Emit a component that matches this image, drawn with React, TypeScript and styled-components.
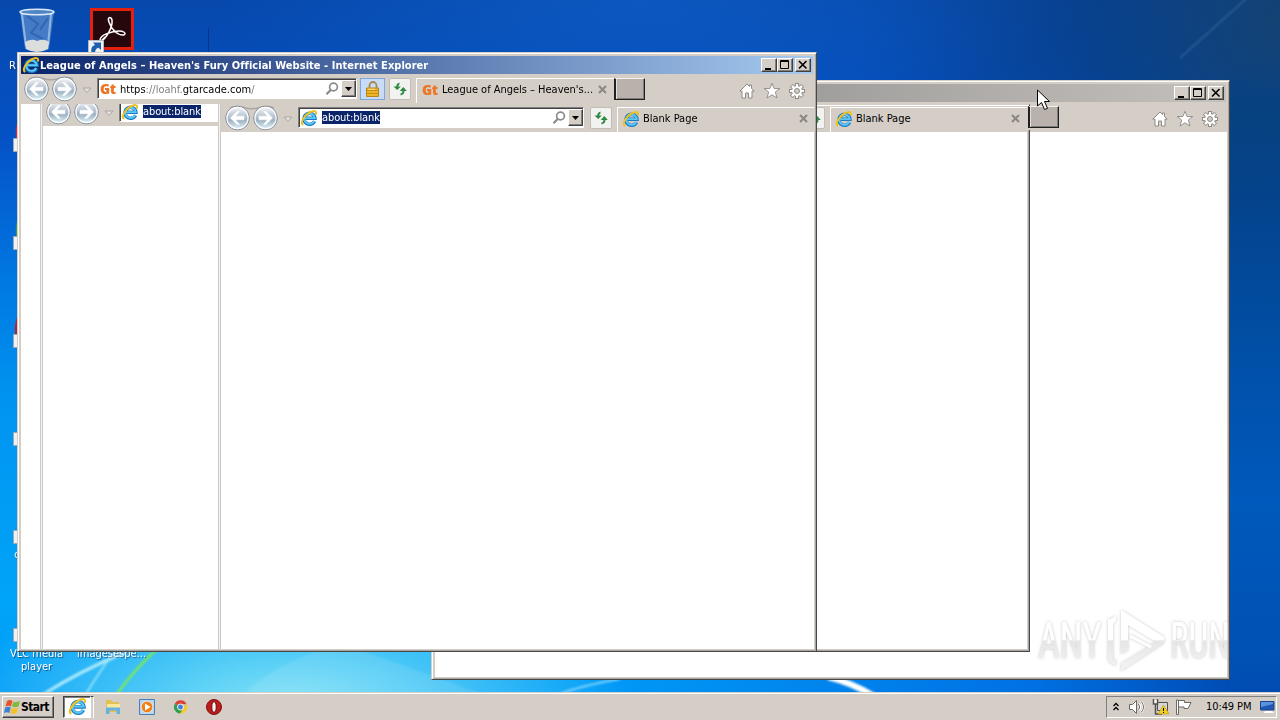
import React from "react";
import styled, { createGlobalStyle, css } from "styled-components";

const GlobalStyle = createGlobalStyle`
  * {
    box-sizing: border-box;
  }
  body {
    margin: 0;
    overflow: hidden;
    font-family: "DejaVu Sans Condensed", "DejaVu Sans", Verdana, sans-serif;
    font-stretch: condensed;
    font-size: 11px;
    color: #000;
  }
  svg {
    display: block;
    flex-shrink: 0;
    overflow: visible;
  }
`;

const face = "#d5cec7";

const Screen = styled.div`
  position: relative;
  width: 1280px;
  height: 720px;
  overflow: hidden;
  display: flex;
  flex-direction: column;
  justify-content: flex-end;
  background:
    radial-gradient(ellipse 340px 150px at 290px 715px, #8ee8f4 0%, rgba(110, 220, 246, 0.75) 40%, rgba(60, 190, 250, 0) 100%),
    radial-gradient(ellipse 420px 130px at 640px 0, rgba(16, 104, 212, 0.5), rgba(16, 104, 212, 0)),
    linear-gradient(90deg, rgba(0, 100, 230, 0) 45%, rgba(0, 96, 220, 0.7) 80%, rgba(0, 70, 175, 0.95) 97%) 0 300px / 1280px 420px no-repeat,
    radial-gradient(ellipse 420px 420px at 1280px 20px, rgba(20, 66, 112, 0.95), rgba(8, 62, 130, 0.75) 45%, rgba(0, 64, 150, 0)),
    linear-gradient(180deg, #0748ac 0, #0452c6 140px, #0078e2 280px, #0094f0 400px, #00a4f8 600px, #0098f8 720px);
`;

const RightShade = styled.div`
  position: absolute;
  right: 0;
  top: 60px;
  width: 50px;
  height: 633px;
  background: linear-gradient(
    180deg,
    rgba(10, 68, 126, 0) 0,
    #07417f 50px,
    #04438c 140px,
    #0050a8 300px,
    #0059bc 440px,
    #0052b4 590px,
    rgba(0, 80, 180, 0.2) 633px
  );
`;

const Rays = styled.svg`
  position: absolute;
  left: 0;
  top: 0;
`;

const DesktopItem = styled.div<{ x: number; y: number }>`
  position: absolute;
  left: ${({ x }) => x}px;
  top: ${({ y }) => y}px;
`;

const Label = styled.div`
  color: #fff;
  line-height: 13px;
  text-align: center;
  white-space: pre;
  text-shadow: 1px 1px 1px rgba(0, 30, 80, 0.6);
`;

const Window = styled.div<{ x: number; y: number; w: number; h: number }>`
  position: absolute;
  left: ${({ x }) => x}px;
  top: ${({ y }) => y}px;
  width: ${({ w }) => w}px;
  height: ${({ h }) => h}px;
  display: flex;
  flex-direction: column;
  padding: 2px;
  background: ${face};
  border: 1px solid ${face};
  border-right-color: #484848;
  border-bottom-color: #484848;
  box-shadow: inset 1px 1px 0 #fff, inset -1px -1px 0 #a8a4a0;
`;

const TitleBar = styled.div<{ active?: boolean }>`
  height: 18px;
  margin: 1px 1px 0;
  flex-shrink: 0;
  display: flex;
  align-items: center;
  padding: 0 2px 0 2px;
  color: #fff;
  font-weight: bold;
  background: ${({ active }) =>
    active
      ? "linear-gradient(90deg, #0a246a, #a6caf0)"
      : "linear-gradient(90deg, #808080, #c4c0bc)"};
`;

const Title = styled.span`
  flex: 1;
  white-space: nowrap;
  letter-spacing: 0.04px;
  padding-left: 1px;
`;

const CaptionButton = styled.span<{ gap?: boolean }>`
  width: 16px;
  height: 14px;
  margin-left: ${({ gap }) => (gap ? 2 : 0)}px;
  background: ${face};
  border: 1px solid;
  border-color: #fff #404040 #404040 #fff;
  box-shadow: inset -1px -1px 0 #848078;
`;

const Toolbar = styled.div<{ h: number; shift?: number; indent?: number }>`
  height: ${({ h }) => h}px;
  flex-shrink: 0;
  display: flex;
  align-items: flex-start;
  overflow: hidden;
  padding-left: ${({ indent = 0 }) => indent}px;
  background: ${face};
  > * {
    margin-top: ${({ shift = 0 }) => shift}px;
  }
`;

const NavSvg = styled.svg`
  position: relative;
  top: -3px;
`;

const AddressBar = styled.div<{ w: number }>`
  width: ${({ w }) => w}px;
  height: 21px;
  flex-shrink: 0;
  display: flex;
  align-items: center;
  padding: 0 0 0 2px;
  background: #fff;
  border: 1px solid;
  border-color: #808080 #fff #fff #808080;
  box-shadow: inset 1px 1px 0 #404040;
`;

const Url = styled.span<{ blank?: boolean }>`
  flex: 1;
  margin-left: ${({ blank }) => (blank ? 5 : 3)}px;
  padding-top: ${({ blank }) => (blank ? 0 : 1)}px;
  white-space: nowrap;
  letter-spacing: 0.02px;
  color: #808080;
  b {
    color: #000;
    font-weight: normal;
  }
`;

const Selected = styled.span`
  display: inline-block;
  height: 13px;
  line-height: 13px;
  color: #fff;
  background: #0a246a;
  letter-spacing: -0.1px;
`;

const DropButton = styled.span`
  width: 15px;
  height: 17px;
  margin-left: 2px;
  display: flex;
  align-items: center;
  justify-content: center;
  background: ${face};
  border: 1px solid;
  border-color: #fff #404040 #404040 #fff;
  box-shadow: inset -1px -1px 0 #808080;
`;

const SquareButton = styled.span<{ kind: "lock" | "refresh"; gap: number }>`
  width: ${({ kind }) => (kind === "lock" ? 25 : 22)}px;
  height: 22px;
  flex-shrink: 0;
  display: flex;
  align-items: center;
  justify-content: center;
  margin-left: ${({ gap }) => gap}px;
  ${({ kind }) =>
    kind === "lock"
      ? css`
          background: #c8dcf8;
          border: 1px solid #7ea6e0;
        `
      : css`
          background: #f2f2f0;
          border: 1px solid #c0bcb6;
          border-radius: 2px;
        `}
`;

const Tab = styled.div<{ w: number }>`
  width: ${({ w }) => w}px;
  height: 25px;
  flex-shrink: 0;
  margin-left: 5px;
  display: flex;
  align-items: center;
  padding: 0 7px 3px 5px;
  border-top: 1px solid #fff;
  border-left: 1px solid #fff;
  background: ${face};
`;

const TabText = styled.span<{ tight?: boolean }>`
  flex: 1;
  margin-left: ${({ tight }) => (tight ? 3 : 4)}px;
  white-space: nowrap;
  letter-spacing: -0.02px;
`;

const NewTab = styled.span`
  width: 31px;
  height: 22px;
  flex-shrink: 0;
  background: #b9b2ac;
  border: 1px solid #202020;
  border-top-color: #f4efe8;
  border-left-width: 2px;
  box-shadow: inset 1px 0 0 #e4dfd8, inset -1px -1px 0 #807c78;
`;

const Commands = styled.div`
  flex: 1;
  display: flex;
  justify-content: flex-end;
  gap: 9px;
  padding: 5px 9px 0 0;
`;

const FrontPage = styled.div`
  flex: 1;
  display: flex;
  margin: 0 0 0 1px;
  min-height: 0;
  background: #fff;
`;

const Page = styled.div`
  flex: 1;
  margin-left: 1px;
  background: #fff;
`;

const Strip = styled.div<{ w?: number }>`
  ${({ w }) => (w ? `width: ${w}px;` : "flex: 1;")}
  min-width: 0;
  background: #fff;
`;

const Edge = styled.div`
  width: 3px;
  background: #f4f2f0;
  border-right: 1px solid #cfcac5;
  border-left: 1px solid #cfcac5;
`;

const Taskbar = styled.div`
  position: relative;
  height: 28px;
  display: flex;
  align-items: center;
  padding: 2px 3px 2px 2px;
  background: ${face};
  border-top: 1px solid ${face};
  box-shadow: inset 0 1px 0 #fff;
`;

const StartButton = styled.div`
  width: 52px;
  height: 22px;
  display: flex;
  align-items: center;
  padding-left: 1px;
  font-weight: bold;
  font-size: 12px;
  letter-spacing: -0.6px;
  border: 1px solid;
  border-color: #fff #404040 #404040 #fff;
  box-shadow: inset -1px -1px 0 #808080;
`;

const ActiveTask = styled.div`
  width: 28px;
  height: 22px;
  margin-left: 9px;
  display: flex;
  align-items: center;
  justify-content: center;
  background: #fff;
  border: 1px solid;
  border-color: #404040 #fff #fff #404040;
  box-shadow: inset 1px 1px 0 #808080;
`;

const StackedEdge = styled.div`
  width: 3px;
  height: 22px;
  border-top: 1px solid #404040;
  border-right: 1px solid #fff;
`;

const Launchers = styled.div`
  display: flex;
  flex: 1;
  gap: 18px;
  padding-left: 11px;
`;

const Tray = styled.div`
  width: 171px;
  height: 22px;
  display: flex;
  align-items: center;
  padding-left: 5px;
  border: 1px solid;
  border-color: #808080 #fff #fff #808080;
`;

const Clock = styled.span`
  width: 46px;
  margin: 0 8px 0 13px;
  white-space: nowrap;
  letter-spacing: -0.1px;
`;

const Overlay = styled.svg<{ x: number; y: number }>`
  position: absolute;
  left: ${({ x }) => x}px;
  top: ${({ y }) => y}px;
`;

const IeIcon = ({ size = 16 }: { size?: number }) => (
  <svg width={size} height={size} viewBox="0 0 16 16" fill="none">
    <path d="M13.500 11.200A5.500 5.500 0 1 1 14 8.300H4" stroke="#1c7cc6" strokeWidth="3.400" />
    <path d="M13.200 11A5.200 5.200 0 1 1 13.700 8.100H4.400" stroke="#5cc8f6" strokeWidth="1.900" />
    <path
      d="M2.200 15C-1.400 13 3 5.500 8.500 2.500C12.500 .4 16 .3 14.900 4.500"
      stroke="#f0c01c"
      strokeWidth="2"
    />
  </svg>
);

const GtIcon = () => (
  <svg width="17" height="16" viewBox="0 0 17 16">
    <text
      x="0"
      y="13"
      fontFamily="Open Sans, sans-serif"
      fontSize="14"
      fontWeight="800"
      fill="#ee7426"
      textLength="16"
      lengthAdjust="spacingAndGlyphs"
    >
      Gt
    </text>
  </svg>
);

const NavButtons = () => (
  <NavSvg width="76" height="28" viewBox="0 0 76 28">
    <defs>
      <linearGradient id="orb" x1="0" y1="0" x2="0" y2="1">
        <stop offset="0" stopColor="#fbfcfd" />
        <stop offset=".3" stopColor="#ccd4de" />
        <stop offset=".6" stopColor="#9fb1c2" />
        <stop offset="1" stopColor="#e4fbff" />
      </linearGradient>
    </defs>
    <path d="M8 4Q14 1.500 22 3.500Q30 6 38 3.500Q46 1.500 52 4" stroke="#aaa6a2" fill="none" strokeWidth="1.500" />
    {[15.5, 43.5].map((cx, i) => (
      <g key={cx} transform={`translate(${cx} 14)`}>
        <circle r="11.800" fill="url(#orb)" stroke="#7f8b98" />
        <circle r="10.600" fill="none" stroke="#fff" strokeWidth="1.300" opacity=".9" />
        <path
          d="M-7 0L-.5-6.500H2L-2-1.800H6.500V1.800H-2L2 6.500H-.5z"
          transform={i ? "scale(-1 1)" : undefined}
          fill="#fff"
          stroke="#fff"
          strokeWidth=".5"
        />
      </g>
    ))}
    <path d="M62 13h8l-4 4.500z" fill="#e6e1dc" stroke="#aaa5a0" />
  </NavSvg>
);

const SearchIcon = () => (
  <svg width="15" height="15" viewBox="0 0 15 15" fill="none" stroke="#8a8a8a">
    <circle cx="9.500" cy="6" r="3.900" strokeWidth="1.700" />
    <path d="M6.700 9L2.500 13.200" strokeWidth="2.200" />
  </svg>
);

const DownArrow = () => (
  <svg width="7" height="4" viewBox="0 0 7 4">
    <path d="M0 0h7L3.500 4z" fill="#000" />
  </svg>
);

const LockIcon = () => (
  <svg width="14" height="16" viewBox="0 0 14 16">
    <path d="M3.500 8V4.500a3.500 3.500 0 0 1 7 0V8" fill="none" stroke="#a48a4c" strokeWidth="1.800" />
    <path d="M.5 7h12v8.500H.5z" fill="#efb526" stroke="#b98516" />
    <path d="M1 9.500h11M1 12.500h11" stroke="#c88e18" />
    <path d="M2 8.300h7" stroke="#ffe48a" />
  </svg>
);

const RefreshIcon = () => (
  <svg width="16" height="16" viewBox="0 0 16 16">
    <path d="M1.500 5.500h2.700Q4.200 2.500 7.500 1.500v2Q6.300 4 6.300 5.500H8.800L5.200 9z" fill="#2f8a40" />
    <path d="M14.800 10h-2.300Q12.500 13.500 8.500 14.500v-2q2-.5 2-2.500H7.700L11.300 6z" fill="#2f8a40" />
  </svg>
);

const TabClose = () => (
  <svg width="9" height="9" viewBox="0 0 9 9">
    <path d="M1 1l7 7M8 1L1 8" stroke="#8c8680" strokeWidth="2" />
  </svg>
);

const CommandIcons = () => (
  <Commands>
    <svg width="16" height="16" viewBox="0 0 16 16">
      <path
        d="M8 1L.8 8.200H3V15h3.500v-5h3v5H13V8.200h2.200L12.500 5.500V2h-2v1.500z"
        fill="#fff"
        stroke="#8e8a86"
      />
    </svg>
    <svg width="16" height="16" viewBox="0 0 16 16">
      <path
        d="M8 .3l2.100 5.200H15.800L11.300 9l1.700 6L8 11.800l-5 3.200L4.700 9 .2 5.500h5.700z"
        fill="#fff"
        stroke="#8e8a86"
        strokeWidth=".9"
      />
    </svg>
    <svg width="16" height="16" viewBox="0 0 16 16">
      <g stroke="#8e8a86" fill="#fff">
        {[0, 45, 90, 135].map((a) => (
          <rect key={a} x="6.500" y=".5" width="3" height="15" transform={`rotate(${a} 8 8)`} />
        ))}
        <circle cx="8" cy="8" r="5.500" />
      </g>
      <g fill="#fff">
        {[0, 45, 90, 135].map((a) => (
          <rect key={a} x="7" y="1" width="2" height="14" transform={`rotate(${a} 8 8)`} />
        ))}
      </g>
      <circle cx="8" cy="8" r="2.500" fill={face} stroke="#8e8a86" />
    </svg>
  </Commands>
);

const WindowButtons = () => (
  <>
    <CaptionButton>
      <svg width="14" height="12">
        <path d="M3 9h6v2H3z" />
      </svg>
    </CaptionButton>
    <CaptionButton>
      <svg width="14" height="12">
        <path d="M2.500 1.500h8v8h-8zM2.500 2.500h8" fill="none" stroke="#000" />
      </svg>
    </CaptionButton>
    <CaptionButton gap>
      <svg width="14" height="12">
        <path d="M3 2l7.500 7.500M10.500 2L3 9.500" stroke="#000" strokeWidth="1.600" />
      </svg>
    </CaptionButton>
  </>
);

const RefreshButton = ({ gap = 5 }: { gap?: number }) => (
  <SquareButton kind="refresh" gap={gap}>
    <RefreshIcon />
  </SquareButton>
);

const ShortcutBadge = () => (
  <svg width="14" height="14" viewBox="0 0 14 14">
    <path d="M.5 .5h13v13H.5z" fill="#eef2f6" stroke="#a0a8b0" />
    <path d="M5 12Q4 6 8.500 5V2.500L12 6.500L8.500 10V8Q6.500 8 7 12z" fill="#1f5faf" />
  </svg>
);

const Desktop = () => (
  <>
    <RightShade />
    <Rays width="1280" height="693">
      <defs>
        <filter id="soft">
          <feGaussianBlur stdDeviation="1" />
        </filter>
      </defs>
      <g fill="none" filter="url(#soft)">
        <path d="M44 694Q78 672 126 652" stroke="#c4f4ff" strokeWidth="3" opacity=".85" />
        <path d="M86 694Q100 671 114 652" stroke="#a8ecfa" strokeWidth="2" opacity=".8" />
        <path d="M117 694Q134 670 156 650" stroke="#7be85a" strokeWidth="2.500" />
        <path d="M560 694Q580 686 620 679" stroke="#7fd4ff" strokeWidth="2" />
        <path d="M828 677Q850 682 874 696" stroke="#fff" strokeWidth="6" />
        <path d="M1180 58L1247-2" stroke="#4a80b4" strokeWidth="2" opacity=".4" />
      </g>
      <path d="M245 693Q285 655 345 645L480 693z" fill="#fff" opacity=".1" filter="url(#soft)" />
      <path d="M208.500 28v25" stroke="#0a3584" />
    </Rays>

    <DesktopItem x={18} y={8}>
      <svg width="38" height="46" viewBox="0 0 38 46">
        <path d="M2 4L7 41Q19 47 31 41L36 4z" fill="#6f9cd4" opacity=".6" />
        <path d="M4 6l4 32M33 6l-3 31" stroke="#c3dcf4" strokeWidth="2" opacity=".6" />
        <path d="M9 8l11 8-7 9 12 6M30 10l-8 12" stroke="#1c4fa4" strokeWidth="2" opacity=".5" fill="none" />
        <path d="M7 34q7-4 12-1 7-3 12 1l-1 7q-11 6-22 0z" fill="#dcdedc" />
        <ellipse cx="19" cy="4" rx="17" ry="2.800" fill="#4f86c4" stroke="#d8e8f4" strokeWidth="1.500" />
      </svg>
    </DesktopItem>
    <DesktopItem x={88} y={8}>
      <svg width="46" height="46" viewBox="0 0 46 46">
        <path d="M3.500 1.500h41v39h-41z" fill="#26070c" stroke="#e4200f" strokeWidth="3" />
        <path
          d="M13 33C18 31 25 19 24 12C23 8 19 9 21 14C23 21 30 28 36 27C39 25 35 23 31 23C24 23 12 27 12 32C12 34 15 32 17 29"
          fill="none"
          stroke="#fff"
          strokeWidth="1.500"
        />
        <path d="M.5 32.500h15V46H.5z" fill="#eef2f6" stroke="#b8bcc0" />
        <path d="M3.500 46Q2 38 7 37L5 34.500H13V42L10.500 39.800Q6.500 41 7 46z" fill="#1f5faf" />
      </svg>
    </DesktopItem>
    <DesktopItem x={9} y={59}>
      <Label>R</Label>
    </DesktopItem>
    <DesktopItem x={15} y={120}>
      <svg width="3" height="220">
        <path d="M3 0Q0 8 1 18h2z" fill="#d82440" />
        <path d="M3 98Q0 106 1 116h2z" fill="#2aa24a" />
        <path d="M3 195Q-1 203 0 214h3z" fill="#b82038" />
      </svg>
    </DesktopItem>
    {[138, 236, 334, 432, 530, 628].map((y) => (
      <DesktopItem key={y} x={13} y={y}>
        <ShortcutBadge />
      </DesktopItem>
    ))}
    <DesktopItem x={14} y={548}>
      <Label>c</Label>
    </DesktopItem>
    <DesktopItem x={10} y={647}>
      <Label>{"VLC media\nplayer"}</Label>
    </DesktopItem>
    <DesktopItem x={77} y={647}>
      <Label>imagesespe...</Label>
    </DesktopItem>
  </>
);

const BackWindow = () => (
  <Window x={431} y={80} w={799} h={600}>
    <TitleBar>
      <Title />
      <WindowButtons />
    </TitleBar>
    <Toolbar h={30} shift={4}>
      <CommandIcons />
    </Toolbar>
    <Page />
  </Window>
);

// Only the lower part of this one is painted, it has no caption of its own.
const MiddleWindow = () => (
  <Window x={230} y={104} w={800} h={548}>
    <Toolbar h={25}>
      <Commands />
      <RefreshButton />
      <Tab w={197}>
        <IeIcon />
        <TabText>Blank Page</TabText>
        <TabClose />
      </Tab>
    </Toolbar>
    <Page />
  </Window>
);

const FrontWindow = () => (
  <Window x={17} y={52} w={800} h={600}>
    <TitleBar active>
      <IeIcon />
      <Title>League of Angels – Heaven's Fury Official Website - Internet Explorer</Title>
      <WindowButtons />
    </TitleBar>
    <Toolbar h={30} shift={4} indent={1}>
      <NavButtons />
      <AddressBar w={260}>
        <GtIcon />
        <Url>
          <b>https</b>://loahf.<b>gtarcade.com</b>/
        </Url>
        <SearchIcon />
        <DropButton>
          <DownArrow />
        </DropButton>
      </AddressBar>
      <SquareButton kind="lock" gap={3}>
        <LockIcon />
      </SquareButton>
      <RefreshButton gap={4} />
      <Tab w={198}>
        <GtIcon />
        <TabText tight>League of Angels – Heaven's...</TabText>
        <TabClose />
      </Tab>
      <NewTab />
      <CommandIcons />
    </Toolbar>
    <FrontPage>
      <Strip w={19} />
      <Edge />
      <Strip w={175}>
        <Toolbar h={22} shift={-3}>
          <NavButtons />
          <AddressBar w={260}>
            <IeIcon />
            <Url blank>
              <Selected>about:blank</Selected>
            </Url>
          </AddressBar>
        </Toolbar>
      </Strip>
      <Edge />
      <Strip>
        <Toolbar h={28} shift={3} indent={1}>
          <NavButtons />
          <AddressBar w={286}>
            <IeIcon />
            <Url blank>
              <Selected>about:blank</Selected>
            </Url>
            <SearchIcon />
            <DropButton>
              <DownArrow />
            </DropButton>
          </AddressBar>
          <RefreshButton gap={6} />
          <Tab w={198}>
            <IeIcon />
            <TabText>Blank Page</TabText>
            <TabClose />
          </Tab>
        </Toolbar>
      </Strip>
    </FrontPage>
  </Window>
);

const Watermark = () => (
  <Overlay x={1034} y={604} width="198" height="74">
    <defs>
      <filter id="mark" x="-10%" y="-10%" width="120%" height="120%">
        <feDropShadow dx="0" dy="0" stdDeviation="1.500" floodColor="#888" floodOpacity=".5" />
      </filter>
      <linearGradient id="shade" gradientUnits="userSpaceOnUse" x1="0" y1="0" x2="0" y2="74">
        <stop offset=".48" stopColor="#fff" />
        <stop offset=".5" stopColor="#e6e6e6" />
        <stop offset=".85" stopColor="#f2f2f2" />
      </linearGradient>
    </defs>
    <g filter="url(#mark)" fill="url(#shade)" fontFamily="Roboto, sans-serif" fontWeight="400" fontSize="50">
      <text x="4" y="54" textLength="64" lengthAdjust="spacingAndGlyphs">
        ANY
      </text>
      <text x="136" y="54" textLength="60" lengthAdjust="spacingAndGlyphs">
        RUN
      </text>
      <path d="M87 6L130 33V39L87 67V60L122 38L94 21V46L87 50z" />
      <path d="M96 32L117 43" stroke="#fff" strokeWidth="3" />
      <path d="M74 16L82 12V17L79 20V55L82 57V62L74 57z" />
    </g>
  </Overlay>
);

const App = () => (
  <>
    <GlobalStyle />
    <Screen>
      <Desktop />
      <BackWindow />
      <MiddleWindow />
      <DesktopItem x={1028} y={106}>
        <Toolbar h={24}>
          <NewTab />
        </Toolbar>
      </DesktopItem>
      <FrontWindow />
      <Watermark />
      <Overlay x={1036} y={89} width="14" height="22" viewBox="0 0 14 22">
        <path d="M1.500 1v16l4-3.500 3 7 3-1.200-3-6.800h5z" fill="#fff" stroke="#000" />
      </Overlay>
      <Taskbar>
        <StartButton>
          <svg width="17" height="16" viewBox="0 0 17 16">
            <path d="M3 2Q6 0 8.500 2L7 7.500Q4.500 6 1.500 7.500z" fill="#e8542a" />
            <path d="M9.500 2.500Q12 4 16 2l-1.500 5.500Q11 9 8 7.500z" fill="#82b83c" />
            <path d="M1.200 8.500Q4 7 6.800 8.500L5.300 14Q3 12.500 0 14z" fill="#3c82d2" />
            <path d="M7.800 8.800Q11 10.500 14.200 8.500l-1.500 5.500Q9.500 16 6.300 14z" fill="#f4c22c" />
          </svg>
          Start
        </StartButton>
        <ActiveTask>
          <IeIcon size={17} />
        </ActiveTask>
        <StackedEdge />
        <Launchers>
          <svg width="16" height="16" viewBox="0 0 16 16">
            <path d="M1 1h5l1 2h7v10H1z" fill="#e4bf52" />
            <path d="M2 5h13v6H2z" fill="#fbe89a" />
            <path d="M1 8.500h14V15h-3.500v-3.500h-7V15H1z" fill="#67b3e0" />
          </svg>
          <svg width="16" height="16" viewBox="0 0 16 16">
            <path d="M.5 .5h15v15H.5z" fill="#b6d6f2" stroke="#4a7fb8" />
            <circle cx="8" cy="8" r="5.800" fill="#f08218" stroke="#fff" strokeWidth=".6" />
            <path d="M6 4.500L11.500 8L6 11.500z" fill="#fff" />
          </svg>
          <svg width="15" height="16" viewBox="0 0 16 16">
            <path d="M8 8L1.900 4.500A7 7 0 0 1 14.500 5H8z" fill="#dc4232" />
            <path d="M8 8L14.500 5A7 7 0 0 1 7.500 15z" fill="#f6c926" />
            <path d="M8 8L1.900 4.500A7 7 0 0 0 7.500 15L10.500 10z" fill="#359d4c" />
            <circle cx="8" cy="8" r="3.200" fill="#3f7fe0" stroke="#fff" />
          </svg>
          <svg width="16" height="16" viewBox="0 0 16 16">
            <circle cx="8" cy="8" r="7.500" fill="#bd1c1c" stroke="#841010" />
            <ellipse cx="8" cy="8" rx="2.200" ry="5.300" fill="#f8f4f2" stroke="#6c0c0c" />
          </svg>
        </Launchers>
        <Tray>
          <svg width="8" height="10" viewBox="0 0 8 10" fill="none" stroke="#000" strokeWidth="1.300">
            <path d="M1.500 4L4 1.500L6.500 4M1.500 8L4 5.500L6.500 8" />
          </svg>
          <svg width="32" height="16" viewBox="0 0 32 16" fill="none" stroke="#6c6864">
            <path d="M9.500 5.500h3l4-4v13l-4-4h-3z" fill="#fff" />
            <path d="M19 5q2 3 0 6M21.500 3q3.500 5 0 10" stroke="#fff" strokeWidth="2.500" />
            <path d="M18.500 5q2.500 3 0 6M21.500 3q4 5 0 10" />
          </svg>
          <svg width="17" height="16" viewBox="0 0 17 16">
            <path d="M5.500 3.500h10v8h-10z" fill="#d8d8d4" stroke="#54504c" />
            <path d="M1 1h5v4H1z" fill="#fff" />
            <path d="M1.500 0v5h4V0M3.500 5v10H10" fill="none" stroke="#54504c" strokeWidth="1.500" />
            <path d="M11.500 6L17 15H6z" fill="#f4cf1f" stroke="#b89108" strokeWidth=".6" />
            <path d="M11.500 9v3M11.500 13v1" stroke="#000" />
          </svg>
          <svg width="24" height="16" viewBox="0 0 24 16" fill="#fff" stroke="#6c6864">
            <path d="M7.500 1h2v14.500h-2z" />
            <path d="M9.500 1.500h6v2h6.500l-3 6h-4V8h-5.500z" />
          </svg>
          <Clock>10:49 PM</Clock>
          <svg width="16" height="14" viewBox="0 0 16 14">
            <path d="M.5 1.500H14v8.500H.5z" fill="#2258b4" stroke="#18448c" />
            <path d="M1 2h12v2L1 7z" fill="#5c92e0" />
            <path d="M5 11h7l2 2H4z" fill="#fff" />
          </svg>
        </Tray>
      </Taskbar>
    </Screen>
  </>
);

export default App;
